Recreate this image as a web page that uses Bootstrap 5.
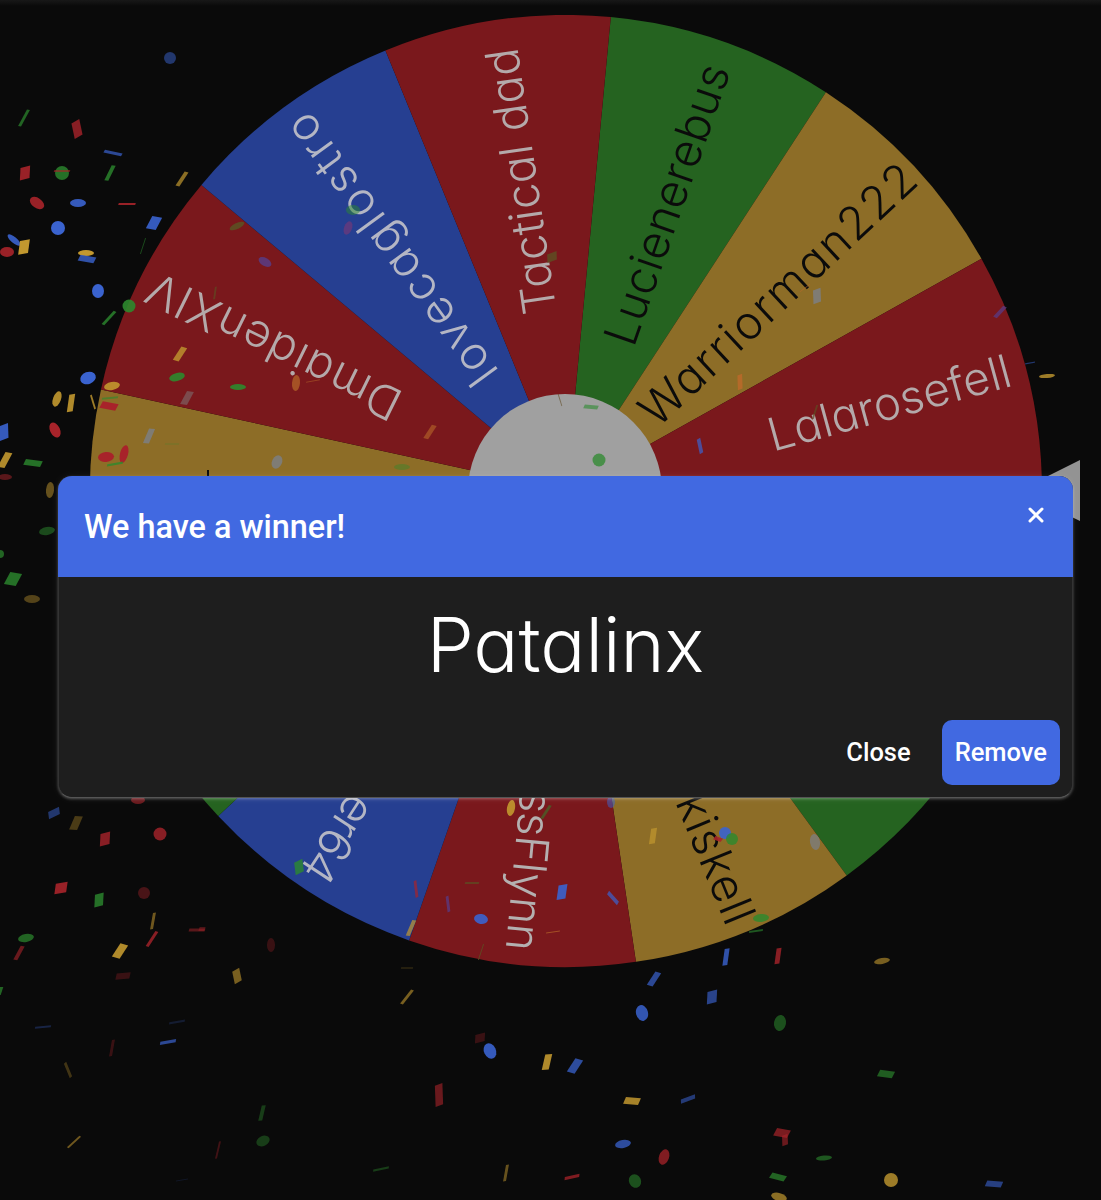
<!DOCTYPE html>
<html lang="en">
<head>
    <meta charset="UTF-8">
    <meta name="viewport" content="width=device-width, initial-scale=1.0">
    <title>Wheel</title>
    <link href="https://cdn.jsdelivr.net/npm/bootstrap@5.3.0/dist/css/bootstrap.min.css" rel="stylesheet">
    <style>
        body {
            background-color: #0a0a0a;
            overflow: hidden;
            height: 1200px;
        }
        .wheel-stage {
            position: absolute;
            top: 0;
            left: 0;
            width: 1101px;
            height: 1200px;
            display: block;
            filter: blur(0.6px);
        }
        .top-strip {
            position: absolute;
            top: 0;
            left: 0;
            right: 0;
            height: 6px;
            background: linear-gradient(#181818, #0a0a0a);
        }
        .wheel-label {
            font-family: Inter, "Liberation Sans", sans-serif;
            font-feature-settings: "cv11";
            font-weight: 300;
            font-size: 46px;
        }
        .winner-modal {
            display: block;
            position: absolute;
            height: auto;
            overflow: visible;
        }
        .winner-modal .modal-dialog {
            max-width: none;
            width: 1015px;
            margin: 476px 0 0 58px;
        }
        .winner-modal .modal-content {
            background-color: #1e1e1e;
            border: 1px solid #333;
            border-top: 0;
            border-bottom-color: #555;
            border-radius: 14px;
            box-shadow: 0 1px 3px rgba(255, 255, 255, .3), 0 0 12px rgba(255, 255, 255, .06);
            font-family: Roboto, "Liberation Sans", sans-serif;
        }
        .winner-modal .modal-header {
            background-color: #4169e1;
            border: 0;
            border-radius: 14px 14px 0 0;
            height: 101px;
            padding: 0 28px 0 26px;
            margin: 0 -1px;
            align-items: flex-start;
        }
        .winner-title {
            color: #fff;
            font-size: 32.4px;
            font-weight: 500;
            line-height: 103px;
            margin: 0;
        }
        .close-x {
            background: none;
            border: 0;
            padding: 0;
            margin-top: 30px;
            width: 18px;
            height: 18px;
            line-height: 0;
        }
        .winner-name {
            color: #fff;
            font-family: Inter, "Liberation Sans", sans-serif;
            font-feature-settings: "cv11";
            font-weight: 300;
            font-size: 75px;
            line-height: 1;
            text-align: center;
            padding: 30px 0 0;
            height: 143px;
        }
        .winner-modal .modal-footer {
            border: 0;
            padding: 0 12px 12px 0;
            gap: 18px;
        }
        .winner-modal .modal-footer > * {
            margin: 0;
        }
        .act-btn {
            color: #fff;
            font-size: 25.5px;
            font-weight: 500;
            border: 0;
            height: 65px;
            line-height: 65px;
            padding: 0 13px;
            border-radius: 10px;
        }
        .act-btn:hover {
            color: #fff;
        }
        .act-remove {
            background-color: #4169e1;
        }
        .act-remove:hover {
            background-color: #4169e1;
        }
    </style>
</head>
<body>

    <!-- the wheel and confetti are drawn in here -->
    <svg class="wheel-stage" id="stage" viewBox="0 0 1101 1200" xmlns="http://www.w3.org/2000/svg"></svg>
    <div class="top-strip"></div>

    <!-- Winner dialog -->
    <div class="modal winner-modal">
        <div class="modal-dialog">
            <div class="modal-content">
                <div class="modal-header">
                    <h5 class="winner-title">We have a winner!</h5>
                    <button type="button" class="close-x" aria-label="Close">
                        <svg width="18" height="18" viewBox="0 0 18 18"><path d="M3 3L15 15M15 3L3 15" stroke="#fff" stroke-width="3" stroke-linecap="round"/></svg>
                    </button>
                </div>
                <div class="modal-body p-0">
                    <div class="winner-name">Patalinx</div>
                </div>
                <div class="modal-footer">
                    <button type="button" class="btn act-btn">Close</button>
                    <button type="button" class="btn act-btn act-remove">Remove</button>
                </div>
            </div>
        </div>
    </div>

    <script>
const NS = 'http://www.w3.org/2000/svg';
const stage = document.getElementById('stage');
const CX = 566, CY = 491, R = 476, HUB = 97;
const STEP = 360 / 13;
const START = 5.4;

const COLORS = { r: '#7a181c', g: '#256320', y: '#8d6d27', b: '#263f91' };
const CONF = { r: '#a8232a', g: '#2c8a2e', y: '#c2982f', b: '#3a63cf', k: '#7d7d7d', p: '#5a3a80', o: '#b8692a', n: '#5f4a22' };

// clockwise from the slice right of 12 o'clock: colour, label, text colour, label centre radius, label length
const slices = [
    ['g', 'Lucienerebus', '#0b0b0b', 304, 294],
    ['y', 'Warriorman222', '#0b0b0b', 289, 360],
    ['r', 'Lalarosefell', '#b4a9aa', 335, 250],
    ['b', '', '', 0, 0],
    ['g', '', '', 0, 0],
    ['y', 'kiskell', '#0b0b0b', 397, 136],
    ['r', 'ssFlynn', '#b4b0b0', 381, 162],
    ['b', 'er64', '#b4b6c4', 416, 95],
    ['g', '', '', 0, 0],
    ['y', '', '', 0, 0],
    ['r', 'DmaidenXIV', '#b4a9aa', 326, 277],
    ['b', 'lovecaglostro', '#b4b6c4', 298, 325],
    ['r', 'Tactical dad', '#b4a9aa', 313, 268]
];

function pt(angle, r) {
    const a = (angle - 90) * Math.PI / 180;
    return [CX + r * Math.cos(a), CY + r * Math.sin(a)];
}

function add(parent, name, attrs, text) {
    const el = document.createElementNS(NS, name);
    Object.keys(attrs).forEach(k => el.setAttribute(k, attrs[k]));
    if (text) el.textContent = text;
    parent.appendChild(el);
    return el;
}

// pointer
add(stage, 'polygon', { points: '1018,491 1080,460 1080,521', fill: '#939393' });

// slices + labels
slices.forEach((s, i) => {
    const a0 = START + i * STEP, a1 = a0 + STEP;
    const p0 = pt(a0, R), p1 = pt(a1, R);
    add(stage, 'path', {
        d: `M${CX} ${CY}L${p0[0]} ${p0[1]}A${R} ${R} 0 0 1 ${p1[0]} ${p1[1]}Z`,
        fill: COLORS[s[0]]
    });
});
slices.forEach((s, i) => {
    if (!s[1]) return;
    const mid = START + (i + 0.5) * STEP;
    const p = pt(mid, s[3]);
    add(stage, 'text', {
        class: 'wheel-label',
        x: p[0], y: p[1],
        fill: s[2],
        'text-anchor': 'middle',
        'dominant-baseline': 'central',
        textLength: s[4],
        transform: `rotate(${mid - 90} ${p[0]} ${p[1]})`
    }, s[1]);
});

add(stage, 'circle', { cx: 565, cy: CY, r: HUB, fill: '#a0a0a0' });
add(stage, 'rect', { x: 207, y: 470, width: 2, height: 7, fill: '#0b0b0b' });

// confetti: kind (c circle, e ellipse, q quad), x, y, w, h, rotation, colour, opacity
const confetti = [
    ['q',24,118,3,18,10,'g',.7],['q',77,129,9,15,-30,'r',.8],['q',25,173,10,12,-15,'r',.9],['c',62,173,7,7,0,'g',.8],
    ['q',62,171,16,2,0,'r',.6],['q',113,153,18,3,12,'b',.7],['q',110,173,4,16,8,'g',.8],['q',182,179,4,16,15,'y',.7],
    ['e',37,203,8,5,35,'r',.9],['e',78,203,8,4,0,'b',.9],['q',127,204,17,2,0,'r',.9],['c',58,228,7,7,0,'b',1],
    ['q',154,223,10,13,10,'b',.9],['e',14,240,8,3,40,'b',.9],['e',7,252,7,5,0,'r',.9],['q',24,247,10,13,-10,'y',1],
    ['e',86,253,8,3,0,'y',1],['q',87,259,16,6,10,'b',.8],['q',143,246,1,16,0,'g',.5],['e',98,291,6,7,0,'b',1],
    ['c',129,306,6.5,6.5,0,'g',.9],['q',109,318,3,17,25,'g',.8],['e',88,378,8,6,-20,'b',1],['e',57,399,4,8,20,'y',.9],
    ['q',71,403,6,17,-10,'y',.9],['e',112,386,8,4,-10,'y',.9],['q',93,402,2,14,-35,'y',.8],['q',109,406,16,7,10,'r',1],
    ['q',110,398,16,2,-5,'g',.6],['e',55,430,5,8,-25,'r',1],['q',4,432,9,14,-20,'b',.9],['q',5,460,7,16,10,'y',.9],
    ['q',33,463,17,6,8,'g',.8],['e',5,477,7,3,0,'r',.5],['e',50,490,4,8,5,'y',.5],['e',47,531,8,4,-10,'g',.5],
    ['c',0,554,4,4,0,'g',.7],['q',13,579,12,13,10,'g',.8],['e',32,599,8,4,0,'y',.4],

    ['q',180,354,6,15,15,'y',.8],['e',177,377,8,4,-15,'g',.9],['q',187,398,7,14,10,'k',.5],['q',149,436,6,15,5,'k',.9],
    ['e',106,457,8,5,-5,'r',1],['e',124,454,4,9,15,'r',1],['q',115,464,16,2,-10,'g',.8],['q',172,444,14,1,0,'g',.3],
    ['e',237,226,8,3,-25,'n',1],['e',265,262,7,4,30,'p',.9],['e',353,210,7,5,0,'g',.5],['e',348,228,4,7,20,'p',1],
    ['q',552,257,10,8,-20,'n',.9],['q',215,293,2,12,-10,'n',.7],['q',430,432,5,15,15,'o',.6],['e',238,387,8,3,0,'g',.9],
    ['e',296,383,4,8,5,'o',.7],['q',313,381,14,1,-10,'o',.5],['e',402,467,8,3,0,'g',.4],['e',277,462,5,7,25,'k',.9],
    ['e',170,58,6,6,0,'b',.5],['q',560,400,1,12,-35,'n',.6],['q',805,288,1,12,35,'o',.6],['q',817,296,8,13,-20,'k',.9],
    ['q',740,382,5,14,-20,'o',.9],['q',1000,312,4,14,25,'p',.8],['q',1030,363,10,1,-10,'b',.5],['e',1047,376,8,2,-5,'y',.8],
    ['q',815,412,2,14,0,'n',.7],['q',700,446,4,14,-30,'b',.7],['q',591,407,14,4,5,'g',.6],['c',599,460,6.5,6.5,0,'g',.75],

    ['e',511,808,4,8,10,'y',.9],['q',546,812,3,15,15,'g',.5],['e',611,802,4,6,0,'b',.5],['q',653,836,6,15,-10,'y',.7],
    ['c',725,833,6,6,0,'b',.9],['c',732,839,6,6,0,'g',.8],['q',718,839,8,4,20,'r',.9],['e',815,842,5,8,-10,'k',.8],
    ['q',299,867,9,12,-25,'g',.8],['q',416,889,3,16,-25,'r',.7],['q',472,883,14,2,0,'n',.8],['q',448,904,3,15,-25,'p',.8],
    ['e',481,919,7,5,10,'b',.9],['q',562,892,9,14,-10,'b',.9],['q',613,898,4,14,-60,'b',.7],['q',553,932,14,1,-8,'o',.7],
    ['q',411,928,4,16,5,'y',.7],['q',481,952,1,16,0,'n',.9],['e',761,918,8,4,-5,'g',.8],['q',756,931,14,2,-8,'g',.6],
    ['q',726,957,5,16,-10,'b',.8],['q',778,956,5,15,-10,'r',.8],['e',882,961,8,3,-10,'y',.6],['e',271,945,4,7,0,'r',.3],
    ['q',202,929,6,4,0,'r',.4],['q',237,976,8,12,-30,'y',.6],['q',407,968,12,1,0,'y',.3],['q',654,979,6,15,15,'b',.7],

    ['e',138,800,7,4,0,'r',.6],['q',54,813,12,7,-25,'b',.5],['q',76,823,8,14,5,'y',.35],['q',105,839,10,12,-15,'r',.8],
    ['c',160,834,6.5,6.5,0,'r',.8],['q',61,888,12,10,-10,'r',.9],['q',99,900,9,12,-15,'g',.8],['c',144,893,6,6,0,'r',.4],
    ['q',153,921,3,16,-8,'y',.55],['q',152,939,3,17,15,'r',.8],['e',26,938,8,4,-10,'g',.7],['q',19,953,4,15,10,'r',.6],
    ['q',120,951,8,15,15,'y',.9],['q',197,930,16,3,0,'r',.5],['q',123,976,14,6,-5,'r',.3],['q',407,997,3,17,20,'y',.6],
    ['q',0,991,4,8,0,'g',.7],['q',43,1027,16,2,-5,'b',.3],['q',177,1022,16,2,-10,'b',.2],['q',168,1042,16,3,-10,'b',.7],
    ['q',112,1048,3,16,-8,'r',.3],['q',480,1038,10,8,-15,'r',.3],['e',490,1051,6,8,-25,'b',.9],['q',547,1062,7,15,-5,'y',.9],
    ['q',439,1095,8,20,-20,'r',.6],['q',68,1070,3,15,-40,'y',.3],['q',262,1113,4,15,-5,'g',.4],['q',74,1142,2,16,30,'y',.55],
    ['q',218,1150,2,17,-5,'r',.35],['e',263,1141,7,5,-25,'g',.4],['q',381,1169,16,2,-12,'g',.4],['q',506,1173,3,16,-8,'y',.5],
    ['q',182,1180,12,1,-10,'b',.15],
    ['q',712,997,10,12,-15,'b',.65],['e',642,1013,6,8,-15,'b',.85],['e',780,1023,6,8,10,'g',.55],['q',575,1066,8,15,15,'b',.75],
    ['q',886,1074,15,7,8,'g',.65],['q',632,1101,15,7,5,'y',.85],['q',688,1099,15,4,-20,'b',.55],['q',782,1133,14,8,10,'r',.7],
    ['q',785,1140,6,10,-20,'r',.6],['e',623,1144,8,4,-10,'b',.75],['e',664,1157,5,8,20,'r',.75],['q',572,1177,15,3,-12,'r',.75],
    ['e',635,1181,6,7,-25,'g',.55],['e',824,1158,8,2.5,-5,'g',.6],['q',778,1177,15,6,15,'g',.7],['c',891,1180,7,7,0,'y',.8],
    ['q',994,1184,16,6,5,'b',.6],['e',779,1197,8,4,15,'y',.7]
];

confetti.forEach(c => {
    const colour = CONF[c[6]];
    const attrs = { fill: colour, opacity: c[7], transform: `translate(${c[1]} ${c[2]}) rotate(${c[5]})` };
    if (c[0] === 'c') {
        add(stage, 'circle', Object.assign(attrs, { r: c[3] }));
    } else if (c[0] === 'e') {
        add(stage, 'ellipse', Object.assign(attrs, { rx: c[3], ry: c[4] }));
    } else {
        // paper bits are seen at an angle, so they come out as parallelograms
        attrs.transform += ' skewX(-18)';
        add(stage, 'rect', Object.assign(attrs, { x: -c[3] / 2, y: -c[4] / 2, width: c[3], height: c[4] }));
    }
});
    </script>

    <script src="https://cdn.jsdelivr.net/npm/bootstrap@5.3.0/dist/js/bootstrap.bundle.min.js"></script>
</body>
</html>
